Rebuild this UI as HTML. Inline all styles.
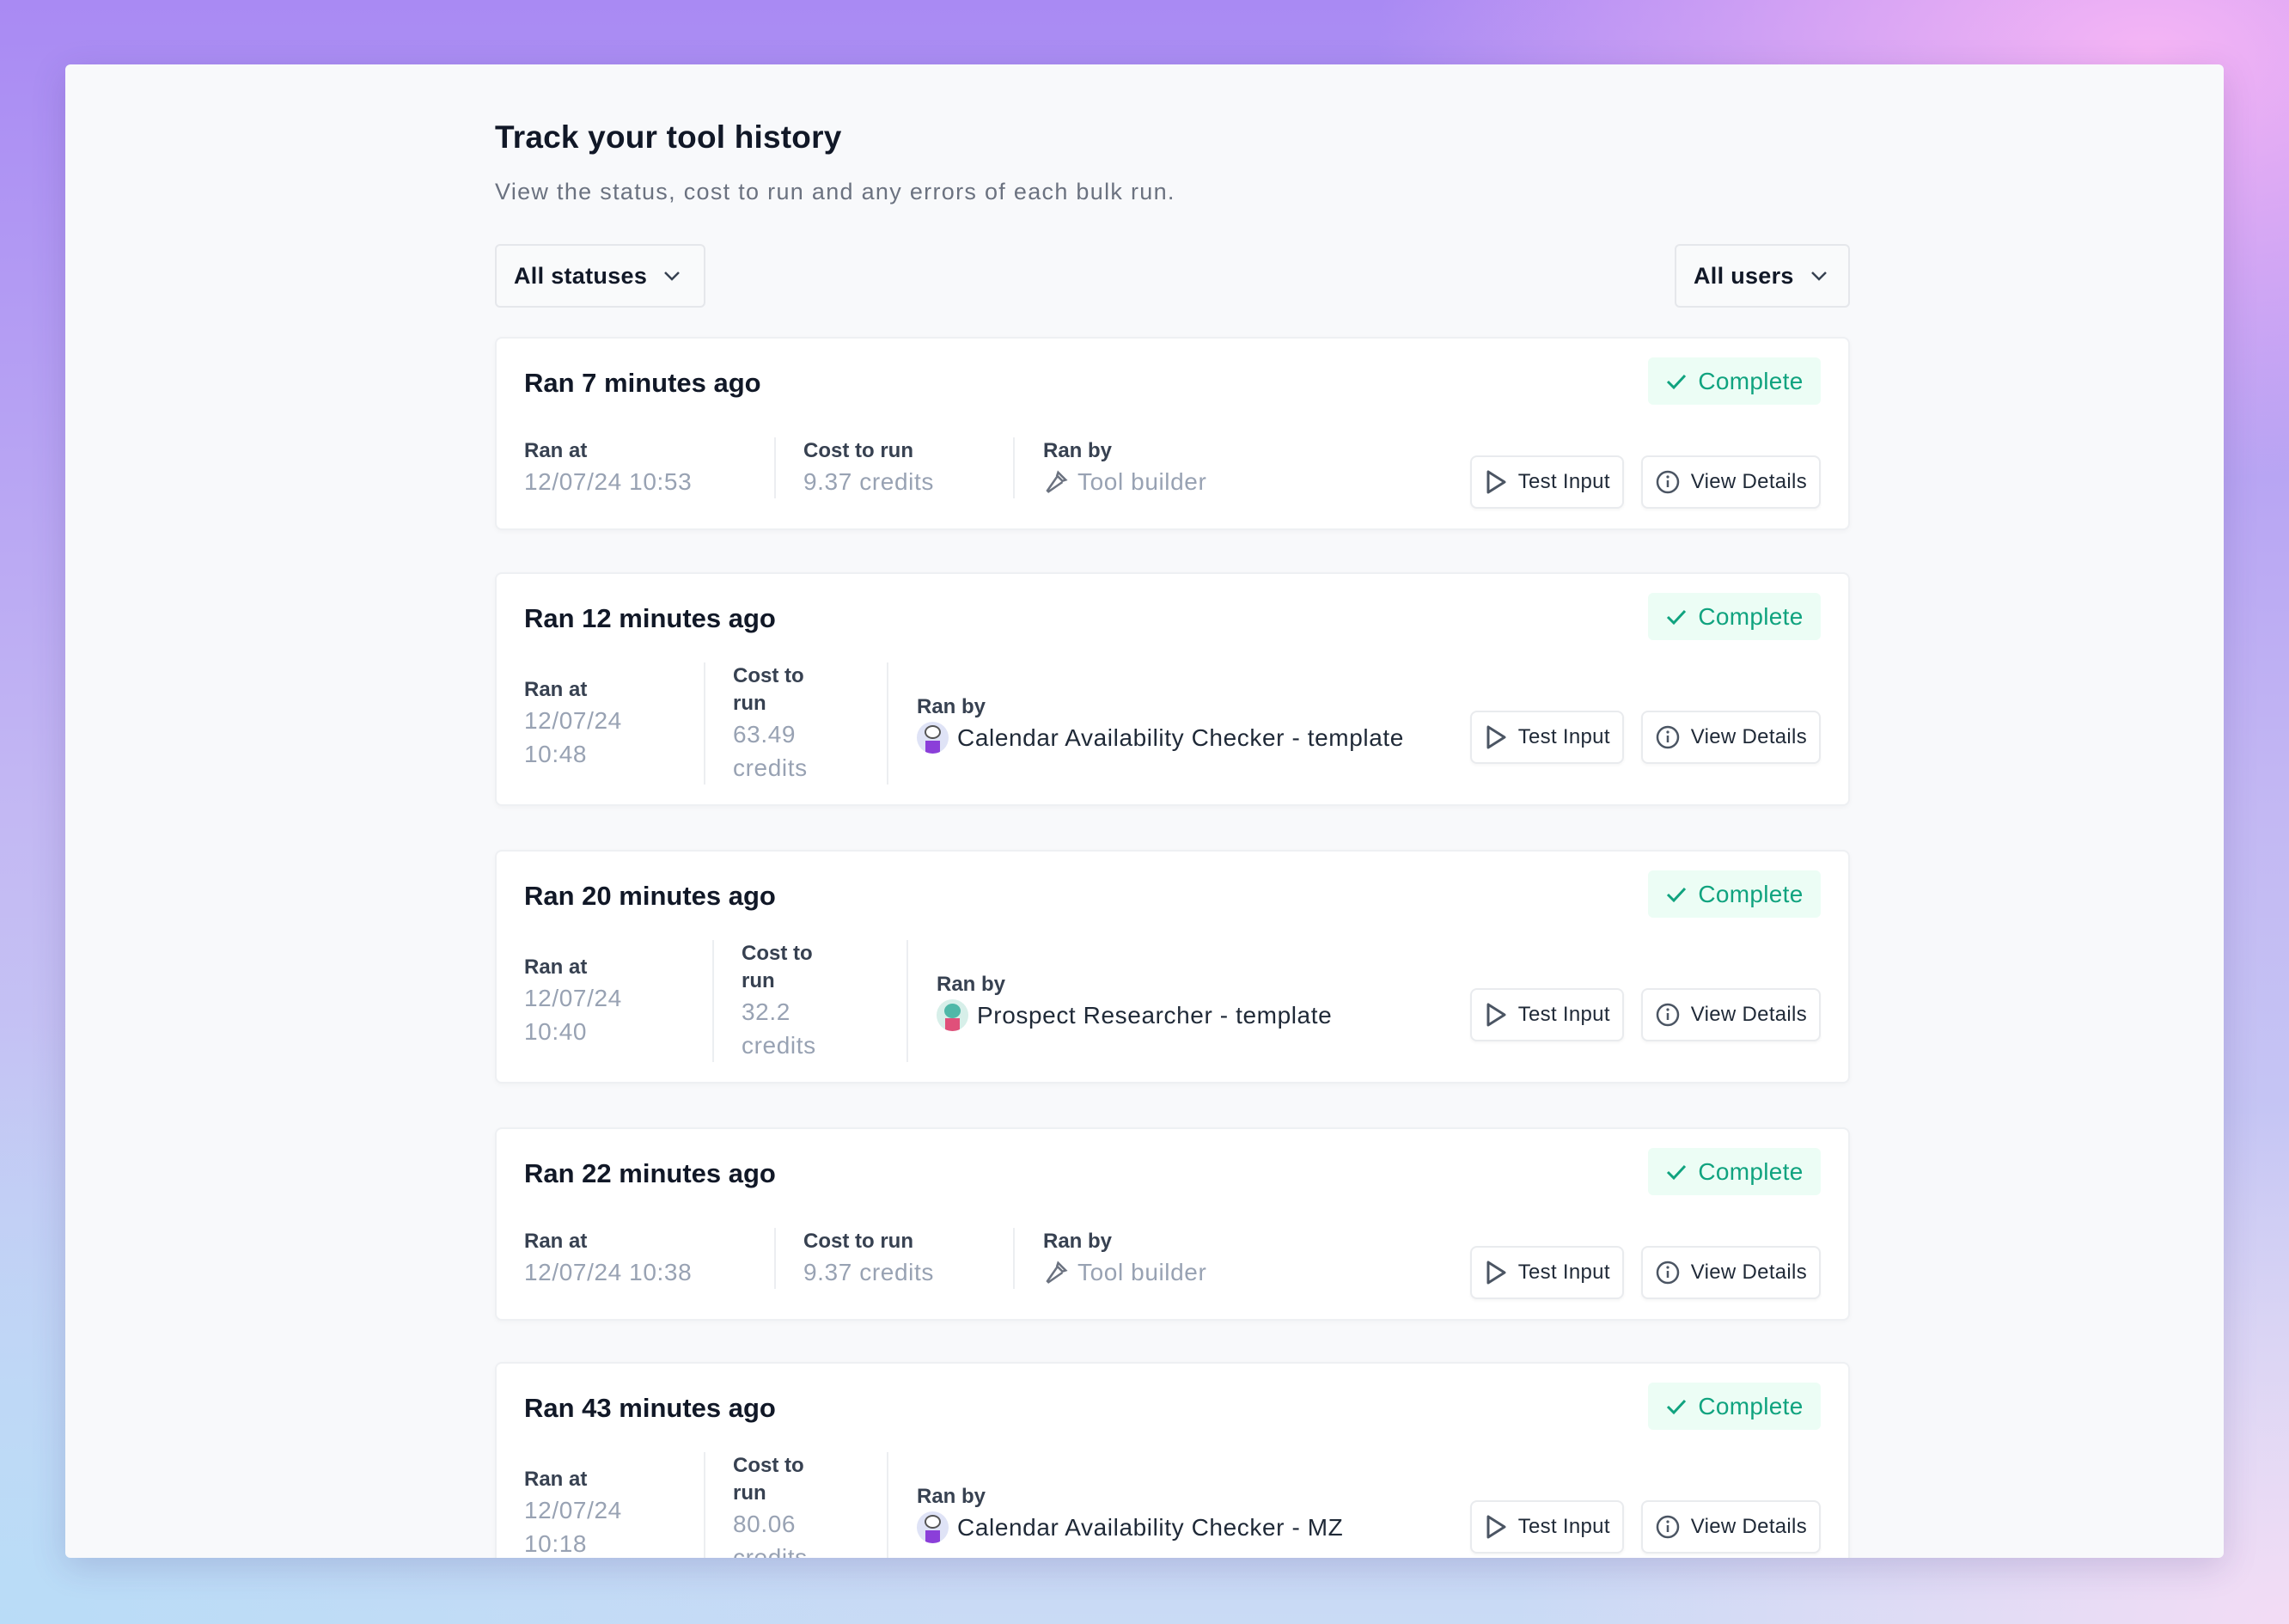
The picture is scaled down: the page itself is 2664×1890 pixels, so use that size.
<!DOCTYPE html>
<html><head><meta charset="utf-8"><style>
*{box-sizing:border-box;margin:0;padding:0}
html,body{width:2664px;height:1890px;overflow:hidden}
body{font-family:"Liberation Sans",sans-serif;position:relative;
background:
radial-gradient(ellipse 900px 500px at 2500px 60px,#f5b5f5 0%,rgba(245,181,245,0) 100%),
radial-gradient(ellipse 1100px 700px at 0px 1890px,#b9dcf7 0%,rgba(185,220,247,0) 100%),
radial-gradient(ellipse 900px 600px at 2664px 1890px,#f3dcf5 0%,rgba(243,220,245,0) 100%),
linear-gradient(180deg,#a98af3 0%,#c3b8f3 50%,#c9dbf5 100%);}
.win{position:absolute;left:76px;top:75px;width:2512px;height:1738px;background:#f8f9fb;border-radius:6px;overflow:hidden;box-shadow:0 10px 40px rgba(60,40,120,.18)}
.in{position:absolute;left:500px;top:0;width:1577px}
h1{position:absolute;top:62px;left:0;font-size:37px;font-weight:700;color:#111827;line-height:46px;letter-spacing:0.2px}
.sub{position:absolute;top:130px;left:0;font-size:27px;color:#6b7280;line-height:36px;letter-spacing:1.3px}
.dd{position:absolute;top:209px;height:74px;border:2px solid #e5e7eb;border-radius:6px;background:#f9fafb;font-size:27px;font-weight:700;color:#111827;display:flex;align-items:center;padding:0 20px;gap:18px;letter-spacing:0.3px}
.card{position:absolute;left:0;width:1577px;background:#fff;border:2px solid #eef0f3;border-radius:8px;padding:30px 32px 0 32px;box-shadow:0 2px 6px rgba(0,0,0,.03)}
.t{font-size:31px;font-weight:700;color:#111827;line-height:44px}
.badge{position:absolute;right:32px;top:22px;width:201px;height:55px;border-radius:6px;background:#ecfdf5;color:#10a37f;font-size:28px;display:flex;align-items:center;justify-content:center;gap:12px;letter-spacing:0.3px}
.row{display:flex;align-items:stretch;position:relative}
.col{display:flex;flex-direction:column;justify-content:center}
.c2,.c3{border-left:2px solid #eceef1}
.c2{padding-left:32px}.c3{padding-left:33px}
.lb{font-size:24px;font-weight:700;color:#374151;line-height:32px}
.v{font-size:28px;color:#98a2b3;line-height:39px;letter-spacing:0.6px}
.vd{font-size:28px;color:#1f2937;line-height:39px;display:flex;align-items:center;gap:10px;letter-spacing:0.6px}
.btns{position:absolute;right:0;top:50%;transform:translateY(calc(-50% + 16px));display:flex;gap:20px}
.b{height:62px;border:2px solid #e9ebee;border-radius:8px;background:#fff;font-size:24px;color:#1f2937;display:flex;align-items:center;gap:12px;padding:0 14px;box-shadow:0 2px 3px rgba(0,0,0,.04);letter-spacing:0.3px}
.av{width:37px;height:37px;border-radius:50%;background:#dfe3f6;position:relative;overflow:hidden;flex:none}
</style></head><body>
<div class="win"><div class="in">
<h1>Track your tool history</h1>
<div class="sub">View the status, cost to run and any errors of each bulk run.</div>
<div class="dd" style="left:0;width:245px">All statuses <svg width="22" height="14" viewBox="0 0 22 14"><path d="M3 3l8 8 8-8" fill="none" stroke="#374151" stroke-width="2.5"/></svg></div>
<div class="dd" style="left:1373px;width:204px">All users <svg width="22" height="14" viewBox="0 0 22 14"><path d="M3 3l8 8 8-8" fill="none" stroke="#374151" stroke-width="2.5"/></svg></div>

<div class="card" style="top:317px;height:225px">
<div class="t">Ran 7 minutes ago</div>
<div class="badge"><svg width="26" height="22" viewBox="0 0 26 22"><path d="M3 11l7 7L23 4" fill="none" stroke="#10a37f" stroke-width="3"/></svg>Complete</div>
<div class="row" style="margin-top:41px">
<div class="col" style="width:291px"><div class="lb">Ran at</div><div class="v">12/07/24 10:53</div></div>
<div class="col c2" style="width:278px"><div class="lb">Cost to run</div><div class="v">9.37 credits</div></div>
<div class="col c3"><div class="lb">Ran by</div><div class="v" style="display:flex;align-items:center;gap:10px"><svg width="30" height="30" viewBox="0 0 24 24"><path d="M14 3l7 7-3 1-5-5zM13 7l-9 13 1 1 13-9" fill="none" stroke="#6b7280" stroke-width="2"/></svg>Tool builder</div></div>
<div class="btns"><div class="b"><svg width="28" height="32" viewBox="0 0 28 32"><path d="M5 4v24l19-12z" fill="none" stroke="#4b5563" stroke-width="3" stroke-linejoin="round"/></svg>Test Input</div><div class="b"><svg width="30" height="30" viewBox="0 0 30 30"><circle cx="15" cy="15" r="12" fill="none" stroke="#4b5563" stroke-width="2.5"/><path d="M15 13v8" stroke="#4b5563" stroke-width="2.5"/><circle cx="15" cy="9" r="1.6" fill="#4b5563"/></svg>View Details</div></div>
</div></div>

<div class="card" style="top:591px;height:272px">
<div class="t">Ran 12 minutes ago</div>
<div class="badge"><svg width="26" height="22" viewBox="0 0 26 22"><path d="M3 11l7 7L23 4" fill="none" stroke="#10a37f" stroke-width="3"/></svg>Complete</div>
<div class="row" style="margin-top:29px">
<div class="col" style="width:209px"><div class="lb">Ran at</div><div class="v">12/07/24<br>10:48</div></div>
<div class="col c2" style="width:213px"><div class="lb">Cost to<br>run</div><div class="v">63.49<br>credits</div></div>
<div class="col c3"><div class="lb">Ran by</div><div class="vd"><div class="av"><div style="position:absolute;left:9px;top:4px;width:19px;height:16px;border-radius:50%;background:#fff;border:2px solid #555"></div><div style="position:absolute;left:10px;top:22px;width:17px;height:15px;background:#8b3fd9"></div></div>Calendar Availability Checker - template</div></div>
<div class="btns"><div class="b"><svg width="28" height="32" viewBox="0 0 28 32"><path d="M5 4v24l19-12z" fill="none" stroke="#4b5563" stroke-width="3" stroke-linejoin="round"/></svg>Test Input</div><div class="b"><svg width="30" height="30" viewBox="0 0 30 30"><circle cx="15" cy="15" r="12" fill="none" stroke="#4b5563" stroke-width="2.5"/><path d="M15 13v8" stroke="#4b5563" stroke-width="2.5"/><circle cx="15" cy="9" r="1.6" fill="#4b5563"/></svg>View Details</div></div>
</div></div>

<div class="card" style="top:914px;height:272px">
<div class="t">Ran 20 minutes ago</div>
<div class="badge"><svg width="26" height="22" viewBox="0 0 26 22"><path d="M3 11l7 7L23 4" fill="none" stroke="#10a37f" stroke-width="3"/></svg>Complete</div>
<div class="row" style="margin-top:29px">
<div class="col" style="width:219px"><div class="lb">Ran at</div><div class="v">12/07/24<br>10:40</div></div>
<div class="col c2" style="width:226px"><div class="lb">Cost to<br>run</div><div class="v">32.2<br>credits</div></div>
<div class="col c3"><div class="lb">Ran by</div><div class="vd"><div class="av" style="background:#d7efe9"><div style="position:absolute;left:9px;top:5px;width:19px;height:17px;border-radius:50%;background:#4fb8a8"></div><div style="position:absolute;left:10px;top:22px;width:17px;height:15px;background:#e0507a"></div></div>Prospect Researcher - template</div></div>
<div class="btns"><div class="b"><svg width="28" height="32" viewBox="0 0 28 32"><path d="M5 4v24l19-12z" fill="none" stroke="#4b5563" stroke-width="3" stroke-linejoin="round"/></svg>Test Input</div><div class="b"><svg width="30" height="30" viewBox="0 0 30 30"><circle cx="15" cy="15" r="12" fill="none" stroke="#4b5563" stroke-width="2.5"/><path d="M15 13v8" stroke="#4b5563" stroke-width="2.5"/><circle cx="15" cy="9" r="1.6" fill="#4b5563"/></svg>View Details</div></div>
</div></div>

<div class="card" style="top:1237px;height:225px">
<div class="t">Ran 22 minutes ago</div>
<div class="badge"><svg width="26" height="22" viewBox="0 0 26 22"><path d="M3 11l7 7L23 4" fill="none" stroke="#10a37f" stroke-width="3"/></svg>Complete</div>
<div class="row" style="margin-top:41px">
<div class="col" style="width:291px"><div class="lb">Ran at</div><div class="v">12/07/24 10:38</div></div>
<div class="col c2" style="width:278px"><div class="lb">Cost to run</div><div class="v">9.37 credits</div></div>
<div class="col c3"><div class="lb">Ran by</div><div class="v" style="display:flex;align-items:center;gap:10px"><svg width="30" height="30" viewBox="0 0 24 24"><path d="M14 3l7 7-3 1-5-5zM13 7l-9 13 1 1 13-9" fill="none" stroke="#6b7280" stroke-width="2"/></svg>Tool builder</div></div>
<div class="btns"><div class="b"><svg width="28" height="32" viewBox="0 0 28 32"><path d="M5 4v24l19-12z" fill="none" stroke="#4b5563" stroke-width="3" stroke-linejoin="round"/></svg>Test Input</div><div class="b"><svg width="30" height="30" viewBox="0 0 30 30"><circle cx="15" cy="15" r="12" fill="none" stroke="#4b5563" stroke-width="2.5"/><path d="M15 13v8" stroke="#4b5563" stroke-width="2.5"/><circle cx="15" cy="9" r="1.6" fill="#4b5563"/></svg>View Details</div></div>
</div></div>

<div class="card" style="top:1510px;height:272px">
<div class="t">Ran 43 minutes ago</div>
<div class="badge"><svg width="26" height="22" viewBox="0 0 26 22"><path d="M3 11l7 7L23 4" fill="none" stroke="#10a37f" stroke-width="3"/></svg>Complete</div>
<div class="row" style="margin-top:29px">
<div class="col" style="width:209px"><div class="lb">Ran at</div><div class="v">12/07/24<br>10:18</div></div>
<div class="col c2" style="width:213px"><div class="lb">Cost to<br>run</div><div class="v">80.06<br>credits</div></div>
<div class="col c3"><div class="lb">Ran by</div><div class="vd"><div class="av"><div style="position:absolute;left:9px;top:4px;width:19px;height:16px;border-radius:50%;background:#fff;border:2px solid #555"></div><div style="position:absolute;left:10px;top:22px;width:17px;height:15px;background:#8b3fd9"></div></div>Calendar Availability Checker - MZ</div></div>
<div class="btns"><div class="b"><svg width="28" height="32" viewBox="0 0 28 32"><path d="M5 4v24l19-12z" fill="none" stroke="#4b5563" stroke-width="3" stroke-linejoin="round"/></svg>Test Input</div><div class="b"><svg width="30" height="30" viewBox="0 0 30 30"><circle cx="15" cy="15" r="12" fill="none" stroke="#4b5563" stroke-width="2.5"/><path d="M15 13v8" stroke="#4b5563" stroke-width="2.5"/><circle cx="15" cy="9" r="1.6" fill="#4b5563"/></svg>View Details</div></div>
</div></div>

</div></div>
</body></html>
